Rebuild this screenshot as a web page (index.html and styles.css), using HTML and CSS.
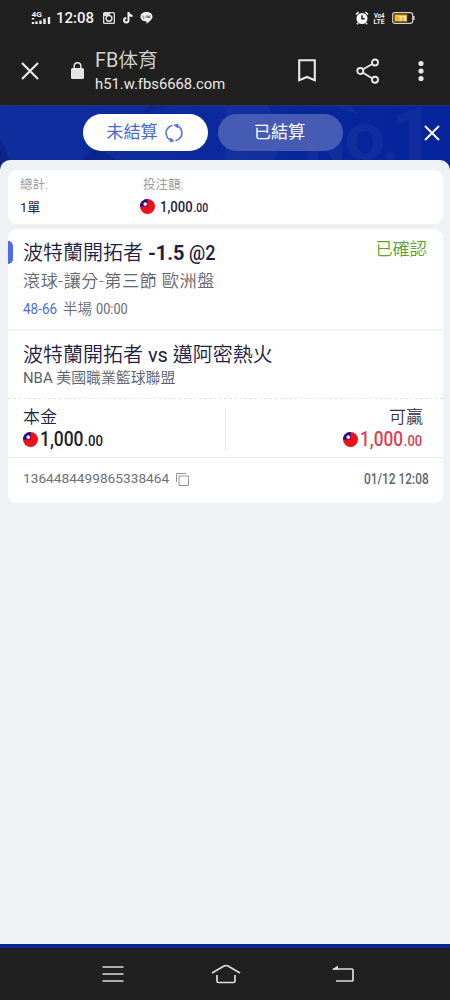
FILE: index.html
```html
<!DOCTYPE html>
<html lang="zh-Hant">
<head>
<meta charset="utf-8">
<meta name="viewport" content="width=device-width, initial-scale=1">
<title>FB体育</title>
<link rel="stylesheet" href="styles.css">
</head>
<body>
<svg class="defs" width="0" height="0" aria-hidden="true">
  <symbol id="flag" viewBox="0 0 16 16">
    <circle cx="8" cy="8" r="8" fill="#f01018"/>
    <path d="M8 8H0A8 8 0 0 1 8 0Z" fill="#170b91"/>
    <circle cx="5.600" cy="5.400" r="2" fill="#f4f5ff"/>
  </symbol>
</svg>
<div class="phone">
  <header class="status">
    <svg class="signal" width="21" height="16" viewBox="0 0 21 16"><text x="0.5" y="7" class="micro" textLength="10.5" lengthAdjust="spacingAndGlyphs">4G</text><path d="M2 8v1.500M2 12v2M5.500 11.500v2.500M9.500 10.500v3.500M13.500 8.500v5.500M18 7v7" stroke="#eee" stroke-width="2.400"/></svg>
    <span class="clock">12:08</span>
    <svg class="app-insta" width="12" height="12" viewBox="0 0 12 12"><rect width="12" height="12" rx="1.500" fill="#ddd"/><rect x="1.300" y="1.300" width="9.400" height="9.400" fill="#202020"/><path d="M1 1h6v3H1Z" fill="#ddd"/><circle cx="6" cy="6.300" r="2.900" fill="#202020" stroke="#ddd" stroke-width="1.500"/></svg>
    <svg class="app-note" width="10" height="12" viewBox="0 0 10 12"><path d="M5.500 0v8.500a2.200 2.200 0 1 1-2.200-2.400M5.500 0.500c.3 2.300 1.700 3.300 4 3.400" fill="none" stroke="#f4f4f4" stroke-width="2"/></svg>
    <svg class="app-line" width="13" height="12" viewBox="0 0 13 12"><path d="M6.500 0C10 0 12.500 2 12.500 4.800c0 2.700-3.200 5-6 6.900V9.500C3 9.500.5 7.600.5 4.800S3 0 6.500 0Z" fill="#f2f2f2"/><path d="M3.200 3.500v2.600h1.500M6 3.500v2.600M7.300 6V3.600l1.300 2.300V3.500M10.800 3.800H9.600v2h1.200" fill="none" stroke="#555" stroke-width=".7"/></svg>
    <svg class="alarm" width="14" height="14" viewBox="0 0 14 14"><circle cx="7" cy="7.500" r="5.500" fill="#fff"/><path d="M1 3.500 3.700 1M13 3.500 10.300 1M3 12l-1 1.300M11 12l1 1.300" stroke="#fff" stroke-width="1.500"/><path d="M7 4.300v3.500h2.800" fill="none" stroke="#222" stroke-width="1.600"/></svg>
    <svg class="volte" width="12" height="13" viewBox="0 0 12 13"><text x="1" y="6" class="micro small" textLength="10.500" lengthAdjust="spacingAndGlyphs">Vo4</text><text x="0.500" y="12.300" class="micro small" textLength="11" lengthAdjust="spacingAndGlyphs">LTE</text></svg>
    <svg class="battery" width="23" height="12" viewBox="0 0 23 12"><rect x=".7" y=".7" width="20" height="10.600" rx="2.200" fill="none" stroke="#d9d2c6" stroke-width="1.200"/><rect x="2.500" y="2.500" width="12.500" height="7" fill="#f7b818"/><path d="M21.800 4v4" stroke="#d9d2c6" stroke-width="1.500"/><text x="6.500" y="9.200" class="micro charge">71</text></svg>
  </header>

  <div class="browser">
    <svg class="browser-close" width="20" height="20" viewBox="0 0 20 20"><path d="m2 2 16 16M18 2 2 18" stroke="#e8e8e8" stroke-width="2.200"/></svg>
    <svg class="lock" width="13" height="17" viewBox="0 0 13 17"><rect y="6" width="13" height="11" rx="1.500" fill="#e4e4e4"/><path d="M3.200 6V4a3.300 3.300 0 0 1 6.600 0v2" fill="none" stroke="#e4e4e4" stroke-width="1.500"/></svg>
    <div class="address">
      <div class="page-title"><span class="latin">FB</span>体育</div>
      <div class="page-url">h51.w.fbs6668.com</div>
    </div>
    <svg class="bookmark" width="18" height="23" viewBox="0 0 18 23"><path d="M1.200 1.200h15.600v20L9 18l-7.800 3.200Z" fill="none" stroke="#e8e8e8" stroke-width="2.100"/></svg>
    <svg class="share" width="24" height="26" viewBox="0 0 24 26"><path d="M4 13 19 4.500M4 13l15 9" stroke="#e8e8e8" stroke-width="1.900"/><g fill="#202020" stroke="#e8e8e8" stroke-width="1.900"><circle cx="4.300" cy="13" r="3"/><circle cx="19" cy="4.500" r="3"/><circle cx="19" cy="21.700" r="3"/></g></svg>
    <svg class="more" width="6" height="22" viewBox="0 0 6 22" fill="#e8e8e8"><circle cx="3" cy="3.500" r="2.600"/><circle cx="3" cy="11" r="2.600"/><circle cx="3" cy="18.500" r="2.600"/></svg>
  </div>

  <main class="app">
    <div class="tabs">
      <svg class="backdrop" width="450" height="66" viewBox="0 0 450 66"><path d="M0 34Q8 44 12 66H0ZM80 55l16-14 20 13ZM142 9Q154 2 172 0h-24Z" fill="#0b258c"/><path d="M225 0h43q18 28 4 66h-47ZM335 0h17l5 8Z" fill="#fff" opacity=".035"/><text x="305" y="54" class="watermark" textLength="94" lengthAdjust="spacingAndGlyphs">NO.</text><text x="391" y="54" class="watermark big">1</text></svg>
      <div class="tab active"><span>未結算</span>
        <svg class="refresh" width="18" height="18" viewBox="0 0 18 18" fill="none" stroke="#5271dc" stroke-width="1.500"><path d="M7.500 16.700A7.800 7.800 0 0 1 4.500 2.600M10.500 1.300A7.800 7.800 0 0 1 13.500 15.400M7.500 1.500A7.500 7.500 0 0 0 4.500 2.600M10.500 16.500a7.500 7.500 0 0 0 3-1.100M5 14.300l3 2.500-3.200.7M13 3.700l-3-2.500 3.200-.7"/></svg>
      </div>
      <div class="tab"><span>已結算</span></div>
      <svg class="panel-close" width="16" height="16" viewBox="0 0 16 16"><path d="m1 1 14 14M15 1 1 15" stroke="#fff" stroke-width="1.900"/></svg>
    </div>

    <div class="sheet">
      <section class="card summary">
        <div class="summary-item count"><div class="label">總計:</div><div class="value">1單</div></div>
        <div class="summary-item"><div class="label">投注額:</div><div class="value money"><svg class="flag" width="15" height="15"><use href="#flag"/></svg><span class="sum">1,000<small>.00</small></span></div></div>
      </section>

      <section class="card bet">
        <div class="pick">
          <i class="marker"></i>
          <div class="pick-head"><div class="selection">波特蘭開拓者 <b>-1.5</b> <span class="odds">@2</span></div><div class="confirmed">已確認</div></div>
          <div class="market">滾球-讓分-第三節 歐洲盤</div>
          <div class="period"><span class="score">48-66</span><span class="half">半場</span><span class="time">00:00</span></div>
        </div>
        <div class="match">
          <div class="teams">波特蘭開拓者 <span class="latin">vs</span> 邁阿密熱火</div>
          <div class="league"><span class="latin">NBA</span> 美國職業籃球聯盟</div>
        </div>
        <div class="amounts">
          <div class="amount"><div class="amount-label">本金</div><div class="money"><svg class="flag" width="15" height="15"><use href="#flag"/></svg><span class="figure">1,000<small>.00</small></span></div></div>
          <div class="amount win"><div class="amount-label">可贏</div><div class="money"><svg class="flag" width="15" height="15"><use href="#flag"/></svg><span class="figure">1,000<small>.00</small></span></div></div>
        </div>
        <footer class="ticket">
          <span class="order">1364484499865338464</span>
          <svg class="copy" width="13" height="13" viewBox="0 0 13 13" fill="none" stroke="#92959c"><path d="M.5 9V.5H10M3 3h9.500v9.500H3Z"/></svg>
          <time>01/12 12:08</time>
        </footer>
      </section>
    </div>
  </main>

  <nav class="system-nav">
    <svg width="22" height="18" viewBox="0 0 22 18"><path d="M.5 2h21M.5 9h21M.5 16h21" stroke="#ddd" stroke-width="1.700"/></svg>
    <svg width="30" height="20" viewBox="0 0 30 20"><path d="m1 9 12-7q2-1 4 0l12 7M6 11v6q0 1.500 1.500 1.500h15q1.500 0 1.500-1.500v-6" fill="none" stroke="#ddd" stroke-width="1.700"/></svg>
    <svg width="22" height="18" viewBox="0 0 22 18"><path d="M1 4h19q1 0 1 1v10q0 1-1 1H4" fill="none" stroke="#ddd" stroke-width="1.700"/><path d="M0 4.500 6 .5v4Z" fill="#ddd"/></svg>
  </nav>
</div>
</body>
</html>
```
FILE: styles.css
```css
* { box-sizing: border-box; }
body { margin: 0; font-family: Roboto, "Noto Sans CJK TC", sans-serif; color: #1e2043; }
svg { display: block; flex: none; }
.defs { position: absolute; }
.latin { font-weight: 400; }
.phone { width: 450px; height: 1000px; display: flex; flex-direction: column; overflow: hidden; background: #202020; }

.status { height: 36px; display: flex; align-items: center; padding-left: 31px; }
.micro { font: 700 8px Roboto, sans-serif; fill: #eee; }
.micro.small { font-size: 6.5px; }
.micro.charge { font-size: 7.5px; fill: #fff; }
.clock { width: 39px; margin-left: 4px; color: #f2f2f2; font-size: 15px; font-weight: 500; line-height: 20px; white-space: nowrap; }
.app-insta { margin-left: 8px; }
.app-note { margin-left: 8px; }
.app-line { margin-left: 7px; }
.alarm { margin-left: 202px; }
.volte { margin-left: 4px; }
.battery { margin-left: 7px; }

.browser { height: 69px; display: flex; align-items: center; padding-left: 20px; color: #e8e8e8; }
.lock { margin-left: 31px; }
.address { width: 150px; margin-left: 11px; }
.page-title { height: 26px; font-size: 19.800px; font-weight: 350; line-height: 26px; color: #d4d4d4; font-family: Roboto, "Noto Sans CJK SC", sans-serif; }
.page-url { font-size: 14.800px; line-height: 20px; }
.bookmark { margin-left: 53px; }
.share { margin-left: 40px; }
.more { margin-left: 38px; }

.app { height: 843px; background: #0b2797; flex: none; border-top: 1px solid #26336d; }
.tabs { height: 54px; display: flex; align-items: center; padding-left: 83px; gap: 10px; background: linear-gradient(90deg, #102f9e, #05239b); position: relative; }
.backdrop { position: absolute; left: 0; top: 0; }
.watermark { font: 900 50px Roboto, sans-serif; fill: #fff; opacity: .035; }
.watermark.big { font-size: 74px; }
.tab { position: relative; width: 125px; height: 37px; margin-bottom: 1px; border-radius: 19px; display: flex; justify-content: center; align-items: center; background: #455bb4; color: #fff; font-size: 17.200px; line-height: 24px; padding: 0 2px 2px 0; }
.tab.active { background: #fff; color: #4868d3; gap: 7px; padding-bottom: 0; }
.tab.active span { margin-top: -1px; }
.panel-close { position: relative; margin-left: 71px; }

.sheet { height: 784px; border-radius: 10px 10px 0 0; background: #eef2f5; padding: 10px 8px 0; position: relative; }
.card { width: 435px; background: #fff; border-radius: 9px; }
.summary { height: 54px; display: flex; padding: 5px 12px; margin-bottom: 5px; }
.count { width: 123px; }
.label { height: 19px; color: #929292; font-size: 12.500px; font-weight: 350; line-height: 20px; }
.value { height: 26px; font-size: 14px; line-height: 28px; }
.count .value { font-size: 13px; }
.money { display: flex; align-items: center; }
.summary .money { margin-left: -3px; height: 24px; }
.sum { margin-left: 5px; padding-top: 3px; font-size: 15px; font-weight: 500; line-height: 22px; transform: scaleX(.87); transform-origin: left; }
.sum small { font-size: 12px; margin-left: 1px; }

.bet { height: 274px; }
.pick { height: 102px; padding: 12px 15px 0; border-bottom: 2px solid #f0f1f3; position: relative; }
.marker { position: absolute; left: 0; top: 12px; width: 5px; height: 23px; border-radius: 0 5px 5px 0; background: #4b6af0; }
.pick-head { height: 27px; display: flex; justify-content: space-between; }
.selection { font-size: 20px; font-weight: 350; line-height: 25px; white-space: nowrap; }
.selection b { font-weight: 700; }
.odds { display: inline-block; font-weight: 500; transform: scaleX(.9); transform-origin: left; }
.confirmed { color: #5ba22f; font-size: 17.200px; font-weight: 350; line-height: 16px; margin-right: 1px; }
.market { height: 28px; color: #626672; font-size: 17.200px; font-weight: 350; line-height: 27px; white-space: nowrap; letter-spacing: .45px; }
.period { display: flex; height: 28px; align-items: center; color: #656b77; font-size: 14.500px; line-height: 26px; }
.score { width: 40px; color: #4e6de7; transform: scaleX(.93); transform-origin: left; }
.half { width: 33px; font-weight: 350; }
.time { transform: scaleX(.88); transform-origin: left; }
.match { height: 67px; padding: 10px 15px 0; }
.teams { height: 26px; font-size: 20px; font-weight: 350; line-height: 28px; white-space: nowrap; }
.league { height: 22px; font-size: 14.900px; font-weight: 350; line-height: 22px; color: #5b606e; }
.amounts { height: 60px; border-top: 1px dashed #e3e5e9; border-bottom: 1px solid #e7e9ec; padding: 9px 15px 6px; display: flex; }
.amount { width: 203px; height: 43px; border-right: 1px solid #e6e8eb; }
.amount-label { height: 20px; font-size: 17px; font-weight: 350; line-height: 19px; }
.amount .money { height: 23px; }
.figure { width: 65px; margin-left: 2px; padding-top: 1px; color: #20212c; font-size: 20.500px; font-weight: 500; line-height: 23px; white-space: nowrap; transform: scaleX(.85); transform-origin: left; }
.figure small { font-size: 15.500px; margin-left: 1px; }
.win { border-right: 0; width: 197px; text-align: right; }
.win .money { justify-content: flex-end; text-align: left; }
.win .figure { color: #dc4052; width: 63px; transform: scaleX(.84); }
.win .amount-label { color: #30324e; }
.ticket { height: 43px; display: flex; align-items: center; padding: 0 15px; color: #6c7079; }
.order { width: 147px; font-size: 13.700px; line-height: 22px; margin-top: -3px; }
.copy { margin-left: 6px; margin-top: -1px; }
time { width: 64px; margin-left: auto; margin-top: -1px; font-size: 13.800px; font-weight: 500; color: #606571; transform: scaleX(.86); transform-origin: left; white-space: nowrap; }

.system-nav { height: 52px; display: flex; align-items: center; gap: 87px; padding: 0 0 0 102px; flex: none; }
.system-nav svg:last-child { margin-left: 4px; }
```
